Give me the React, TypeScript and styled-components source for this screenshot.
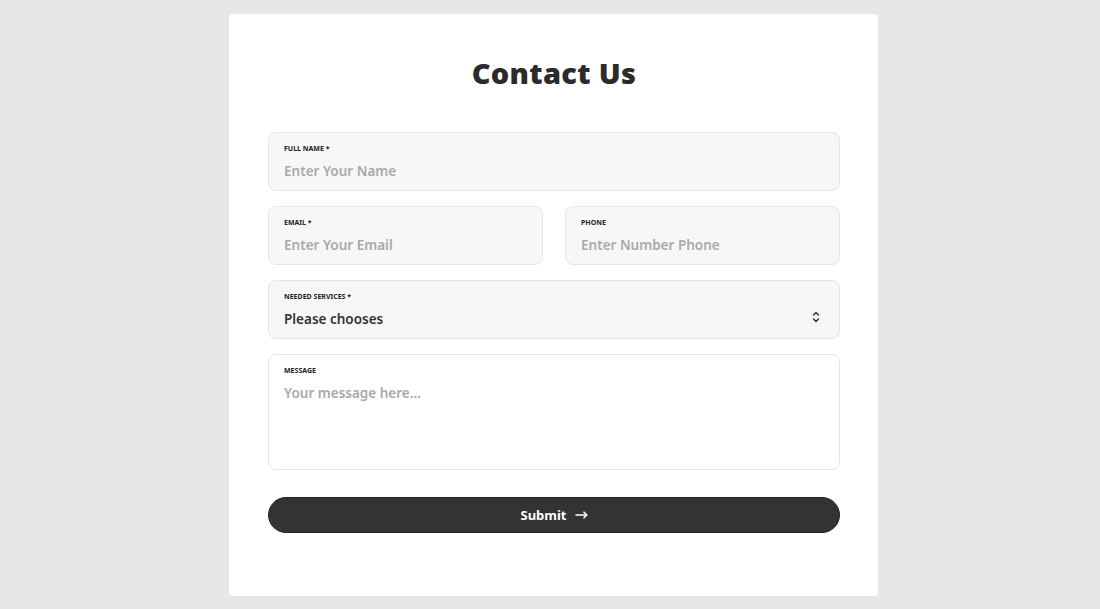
import React from 'react'
import styled, { createGlobalStyle } from 'styled-components'

const GlobalStyle = createGlobalStyle`
  html, body {
    margin: 0;
    padding: 0;
    background: #e7e7e7;
    font-family: "Noto Sans", "DejaVu Sans", sans-serif;
  }
`

const Page = styled.div`
  display: flex;
  justify-content: center;
  padding: 14px 0 13px 7px;
`

const Card = styled.form`
  width: 649px;
  box-sizing: border-box;
  background: #fff;
  border-radius: 4px;
  padding: 44px 38px 63px 39px;
  display: flex;
  flex-direction: column;
`

const Title = styled.h1`
  margin: 0 0 44px;
  text-align: center;
  font-size: 29px;
  font-weight: 900;
  color: #2b2b2b;
  letter-spacing: 0.3px;
  line-height: 30px;
`

const Fields = styled.div`
  display: flex;
  flex-direction: column;
  gap: 15px;
`

const Row = styled.div`
  display: grid;
  grid-template-columns: 1fr 1fr;
  gap: 22px;
`

const Field = styled.label<{ $tall?: boolean; $white?: boolean }>`
  display: flex;
  flex-direction: column;
  position: relative;
  box-sizing: border-box;
  height: ${p => (p.$tall ? '116px' : '59px')};
  padding: 11px 15px 0;
  background: ${p => (p.$white ? '#fff' : '#f7f7f7')};
  border: 1px solid #e6e6e6;
  border-radius: 8px;
`

const Label = styled.span`
  font-size: 7px;
  font-weight: 700;
  text-transform: uppercase;
  color: #222;
  line-height: 10px;
`

const inputText = `
  margin-top: 7px;
  padding: 0;
  border: none;
  outline: none;
  background: transparent;
  font-family: "Noto Sans", "DejaVu Sans", sans-serif;
  font-size: 13.5px;
  font-weight: 600;
  line-height: 20px;
  color: #333;
  &::placeholder { color: #a9a9a9; }
`

const Input = styled.input`
  ${inputText}
`

const TextArea = styled.textarea`
  ${inputText}
  resize: none;
  flex: 1;
  margin-bottom: 10px;
`

const Select = styled.select`
  ${inputText}
  appearance: none;
  color: #333;
  cursor: pointer;
`

const Chevron = styled.svg`
  position: absolute;
  right: 19px;
  top: 30px;
  pointer-events: none;
`

const Submit = styled.button`
  margin-top: 27px;
  height: 36px;
  border: 1px solid #222;
  border-radius: 18px;
  background: #333;
  color: #fff;
  font-family: "Noto Sans", "DejaVu Sans", sans-serif;
  font-size: 13px;
  font-weight: 700;
  display: flex;
  align-items: center;
  justify-content: center;
  gap: 8px;
  cursor: pointer;
`

export default function App() {
  return (
    <>
      <GlobalStyle />
      <Page>
        <Card onSubmit={e => e.preventDefault()}>
          <Title>Contact Us</Title>
          <Fields>
            <Field>
              <Label>Full Name *</Label>
              <Input placeholder="Enter Your Name" />
            </Field>
            <Row>
              <Field>
                <Label>Email *</Label>
                <Input placeholder="Enter Your Email" />
              </Field>
              <Field>
                <Label>Phone</Label>
                <Input placeholder="Enter Number Phone" />
              </Field>
            </Row>
            <Field>
              <Label>Needed Services *</Label>
              <Select defaultValue="">
                <option value="">Please chooses</option>
                <option value="design">Design</option>
                <option value="development">Development</option>
              </Select>
              <Chevron width="8" height="12" viewBox="0 0 8 12" fill="none" stroke="#333" strokeWidth="1.4" strokeLinecap="round" strokeLinejoin="round">
                <path d="M1.5 4 L4 1.5 L6.5 4" />
                <path d="M1.5 8 L4 10.5 L6.5 8" />
              </Chevron>
            </Field>
            <Field $tall $white>
              <Label>Message</Label>
              <TextArea placeholder="Your message here..." />
            </Field>
          </Fields>
          <Submit type="submit">
            Submit
            <svg width="13" height="8" viewBox="0 0 13 8" fill="none" stroke="#fff" strokeWidth="1.6" strokeLinecap="round" strokeLinejoin="round">
              <path d="M1 4 H11.5" />
              <path d="M9 1.2 L11.8 4 L9 6.8" />
            </svg>
          </Submit>
        </Card>
      </Page>
    </>
  )
}
